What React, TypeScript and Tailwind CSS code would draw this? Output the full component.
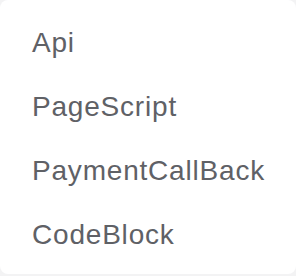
export default function App() {
  const items = ["Api", "PageScript", "PaymentCallBack", "CodeBlock"];
  return (
    <div className="w-[296px] h-[276px] bg-[#f3f3f4]">
      <div
        className="w-[296px] h-[274px] bg-white rounded-[8px] pt-[11px] pl-[32px]"
        style={{ fontFamily: '"Liberation Sans", Arial, sans-serif' }}
      >
        {items.map((t) => (
          <div key={t} className="h-[64px] flex items-center text-[28px] text-[#5f6166] tracking-[0.8px]">
            {t}
          </div>
        ))}
      </div>
    </div>
  );
}
